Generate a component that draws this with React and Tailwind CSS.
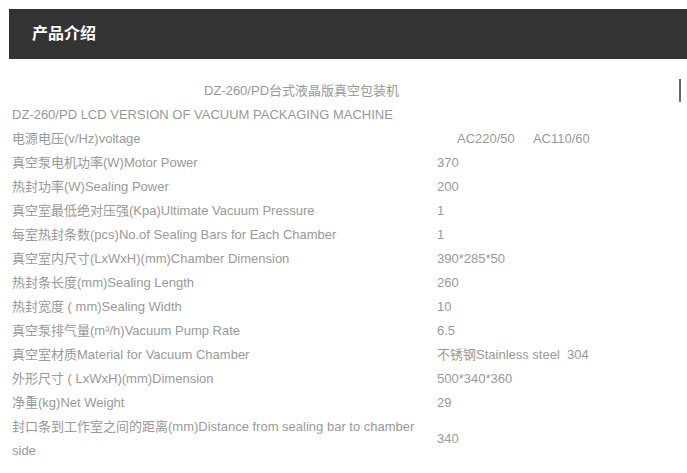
import React from 'react';

const specs = [
    { label: '电源电压(v/Hz)voltage', value: 'AC220/50\u00a0\u00a0\u00a0\u00a0\u00a0AC110/60', indent: true },
    { label: '真空泵电机功率(W)Motor Power', value: '370' },
    { label: '热封功率(W)Sealing Power', value: '200' },
    { label: '真空室最低绝对压强(Kpa)Ultimate Vacuum Pressure', value: '1' },
    { label: '每室热封条数(pcs)No.of Sealing Bars for Each Chamber', value: '1' },
    { label: '真空室内尺寸(LxWxH)(mm)Chamber Dimension', value: '390*285*50' },
    { label: '热封条长度(mm)Sealing Length', value: '260' },
    { label: '热封宽度 ( mm)Sealing Width', value: '10' },
    { label: '真空泵排气量(m³/h)Vacuum Pump Rate', value: '6.5' },
    { label: '真空室材质Material for Vacuum Chamber', value: '不锈钢Stainless steel\u00a0\u00a0304' },
    { label: '外形尺寸 ( LxWxH)(mm)Dimension', value: '500*340*360' },
    { label: '净重(kg)Net Weight', value: '29' },
    { label: '封口条到工作室之间的距离(mm)Distance from sealing bar to chamber side', value: '340' },
];

export default function App() {
    return (
        <div className="w-[687px] h-[473px] bg-white overflow-hidden" style={{ fontFamily: '"Liberation Sans", Arial, "Noto Sans CJK SC", sans-serif' }}>
            <div className="mt-[9px] ml-[9px] h-[50px] bg-[#333333] flex items-center pl-[23px]">
                <h2 className="text-white text-[16px] font-bold">产品介绍</h2>
            </div>
            <div className="relative mt-[20px] ml-[12px] text-[13px] leading-[24px] text-[#999999]">
                <div className="absolute left-[667px] top-0 w-[2px] h-[23px] bg-[#666666]" />
                <div className="pl-[192px]">DZ-260/PD台式液晶版真空包装机</div>
                <div>DZ-260/PD LCD VERSION OF VACUUM PACKAGING MACHINE</div>
                {specs.map(row => (
                    <div key={row.label} className="grid grid-cols-[425px_1fr] items-center">
                        <div className="pr-[4px]">{row.label}</div>
                        <div className={row.indent ? 'pl-[20px]' : ''}>{row.value}</div>
                    </div>
                ))}
            </div>
        </div>
    );
}
